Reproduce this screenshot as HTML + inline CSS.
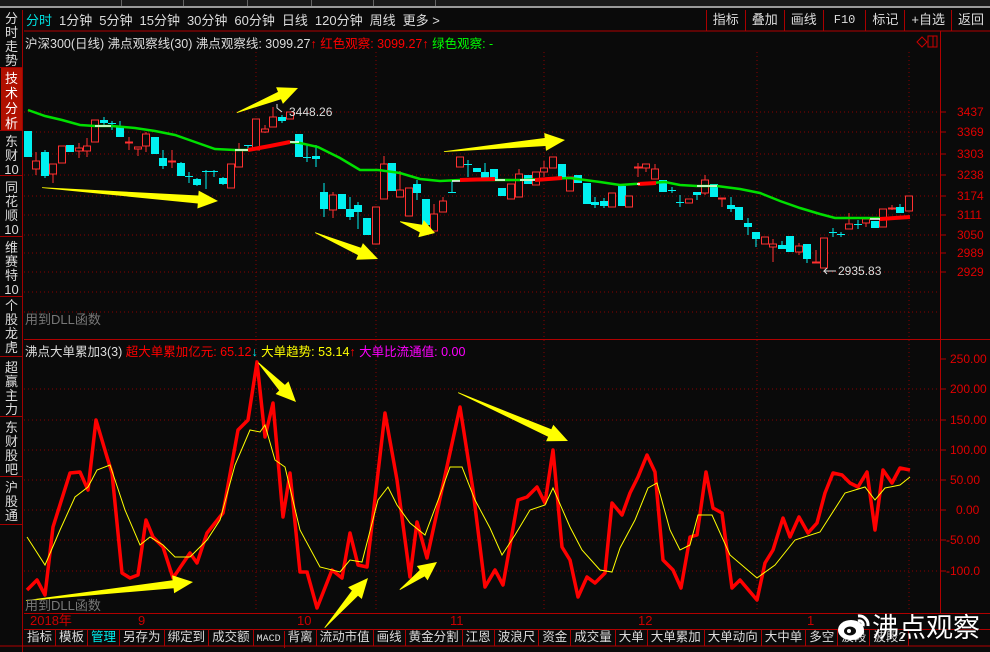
<!DOCTYPE html>
<html><head><meta charset="utf-8">
<style>
*{margin:0;padding:0;box-sizing:border-box}
body{width:990px;height:652px;background:#0a0a0a;overflow:hidden;position:relative;font-family:"Liberation Sans","Noto Sans CJK SC",sans-serif;font-size:12px;color:#ddd}
.abs{position:absolute;white-space:nowrap}
#top{left:0;top:0;width:990px;height:8px;background:#1a1a1a;border-bottom:2px solid #9a9a9a}
#top span{position:absolute;top:0;height:6px;border-right:1px solid #666}
#menu{left:26px;top:10px;font-size:13px;color:#ddd;word-spacing:0}
#menu span{margin-right:7px}
#btns{right:0;top:10px;height:21px;display:flex}
#btns div{border-left:1px solid #a00;padding:0 6px;font-size:13px;line-height:20px;color:#ddd}
.tab{display:inline-block;border-right:1px solid #a00;padding:0 3px;font-size:12.5px;line-height:17px;color:#ddd}
</style></head><body>
<div id="top" class="abs"><span style="left:60px;width:62px"></span><span style="left:122px;width:62px"></span><span style="left:186px;width:62px"></span><span style="left:250px;width:62px"></span><span style="left:312px;width:62px"></span><span style="left:374px;width:62px"></span></div>

<svg class="abs" style="left:0;top:0" width="990" height="652">
<rect x="1" y="68" width="21" height="62" fill="#b01000"/>
<g stroke="#a00000" fill="none"><path d="M22.5 10V652M0 67.5H23M0 130.5H23M0 175.5H23M0 236.5H23M0 296.5H23M0 356.5H23M0 416.5H23M0 476.5H23M0 524.5H23"/></g>
<g stroke="#8a0000" stroke-width="1" stroke-dasharray="1,3" fill="none">
<path d="M24 112H940M24 132H940M24 154H940M24 175H940M24 196H940M24 215H940M24 235H940M24 253H940M24 272H940M24 292H940M24 312H940"/>
<path d="M24 389H940M24 420H940M24 450H940M24 480H940M24 510H940M24 540H940M24 571H940"/>
<path d="M256 52V612M376 52V612M544 52V612M757 52V612M909 52V612"/>
</g>
<g stroke="#b00000" stroke-width="1" fill="none">
<path d="M24 31H990M24 339.5H990M24 613.5H990M24 629.5H990M940.5 31V613"/>
<path d="M0 646H990"/>
</g>
<g stroke="#b00000"><path d="M940 112h6M940 132h6M940 154h6M940 175h6M940 196h6M940 215h6M940 235h6M940 253h6M940 272h6M940 359h6M940 389h6M940 420h6M940 450h6M940 480h6M940 510h6M940 540h6M940 571h6"/></g>
<g fill="#e00000" font-family="Liberation Sans" font-size="12">
<text x="957" y="116">3437</text><text x="957" y="136">3369</text><text x="957" y="158">3303</text><text x="957" y="179">3238</text><text x="957" y="200">3174</text><text x="957" y="219">3111</text><text x="957" y="239">3050</text><text x="957" y="257">2989</text><text x="957" y="276">2929</text>
<text x="950" y="363">250.00</text><text x="950" y="393">200.00</text><text x="950" y="424">150.00</text><text x="950" y="454">100.00</text><text x="950" y="484">50.00</text><text x="956" y="514">0.00</text><text x="946" y="544">-50.00</text><text x="946" y="575">-100.0</text>
</g>
<g font-size="13" fill="#ddd" text-anchor="middle" font-family="Liberation Sans, Noto Sans CJK SC, sans-serif">
<text x="11.5" y="23">分</text><text x="11.5" y="37">时</text><text x="11.5" y="51">走</text><text x="11.5" y="65">势</text>
<text x="11.5" y="83" fill="#fff">技</text><text x="11.5" y="98" fill="#fff">术</text><text x="11.5" y="113" fill="#fff">分</text><text x="11.5" y="128" fill="#fff">析</text>
<text x="11.5" y="146">东</text><text x="11.5" y="160">财</text><text x="11.5" y="174">10</text>
<text x="11.5" y="192">同</text><text x="11.5" y="206">花</text><text x="11.5" y="220">顺</text><text x="11.5" y="234">10</text>
<text x="11.5" y="252">维</text><text x="11.5" y="266">赛</text><text x="11.5" y="280">特</text><text x="11.5" y="294">10</text>
<text x="11.5" y="310">个</text><text x="11.5" y="324">股</text><text x="11.5" y="338">龙</text><text x="11.5" y="352">虎</text>
<text x="11.5" y="372">超</text><text x="11.5" y="386">赢</text><text x="11.5" y="400">主</text><text x="11.5" y="414">力</text>
<text x="11.5" y="432">东</text><text x="11.5" y="446">财</text><text x="11.5" y="460">股</text><text x="11.5" y="474">吧</text>
<text x="11.5" y="492">沪</text><text x="11.5" y="506">股</text><text x="11.5" y="520">通</text>
</g>
<path d="M917 42l5-5 5 5-5 5z" fill="none" stroke="#c00"/><rect x="928" y="36" width="9" height="11" fill="none" stroke="#c00"/><path d="M933 36v11" stroke="#c00"/>
<g id="candles"></g>
<polyline fill="none" stroke="#00e000" stroke-width="2.5" points="28,110 45,116 62,120 80,125 95,126 112,126 135,128 155,131 175,135 195,142 215,149 235,150 248,150 290,142 300,143 318,147 340,158 360,170 378,170 400,173 420,179 440,181 460,180 520,180 570,178 600,182 620,185 665,182 680,185 697,186 717,186 740,189 760,193 780,201 800,208 820,214 835,218 880,218"/>
<g stroke="#ff0000" stroke-width="4" fill="none"><polyline points="248,150 270,146 290,142"/><polyline points="460,180 495,179"/><polyline points="535,180 562,178"/><polyline points="638,184 656,183"/><polyline points="880,219 910,217"/></g>
<g stroke="#fff" stroke-width="1.5"><path d="M95 126h16M235 150h13M290 142h9M452 181h8M495 180h10M520 180h15M640 184h-3M697 186h20M870 219h10"/></g>
<g fill="#ddd" font-size="12"><text x="289" y="116">3448.26</text><text x="838" y="275">2935.83</text></g>
<path d="M282 112l-5-4v-4M836 271h-12l3-3M824 271l3 3" stroke="#ddd" fill="none"/>
<polyline fill="none" stroke="#ff0000" stroke-width="3.5" stroke-linejoin="round" points="27,590 37,580 45,595 53,527 70,473 80,472 88,490 96,420 107,457 112,473 122,573 130,578 138,575 146,520 153,537 163,547 173,578 190,553 197,563 207,533 223,513 238,430 248,420 257,362 265,437 273,403 283,517 290,473 300,572 307,572 317,608 332,570 342,578 350,533 358,565 367,567 385,413 397,480 410,577 417,522 427,558 460,407 473,490 485,587 495,570 503,585 518,500 527,497 537,487 545,503 553,450 562,547 570,560 578,597 587,577 595,583 605,573 612,503 622,515 630,493 638,477 647,455 655,472 663,560 673,570 681,588 690,537 697,535 706,472 713,508 722,513 732,588 740,580 757,600 765,563 773,550 783,518 790,537 799,517 808,533 817,523 825,493 833,473 842,475 850,483 858,487 867,472 875,530 883,470 892,483 900,468 910,470"/>
<polyline fill="none" stroke="#ffff00" stroke-width="1" points="27,537 45,565 60,530 75,497 88,487 97,470 110,465 125,510 140,545 150,537 163,545 175,557 190,557 207,540 220,520 235,465 250,430 260,432 265,425 275,460 285,467 300,530 320,567 340,572 350,560 362,562 378,500 388,487 397,505 410,523 425,535 440,495 450,467 462,467 475,500 490,528 502,555 515,535 530,510 545,505 553,488 570,527 582,550 600,570 612,572 620,548 635,520 648,488 657,483 670,530 680,550 690,545 698,515 712,515 730,555 757,578 775,565 795,540 820,532 845,493 865,487 875,500 885,488 900,485 910,477"/>
<g id="arrows" fill="#ffff00"></g>
<g fill="#cc0000" font-size="13"><text x="30" y="625">2018年</text><text x="138" y="625">9</text><text x="297" y="625">10</text><text x="450" y="625">11</text><text x="638" y="625">12</text><text x="807" y="625">1</text></g>
<g fill="#777" font-size="13"><text x="25" y="324">用到DLL函数</text><text x="25" y="610">用到DLL函数</text></g>
</svg>

<div id="menu" class="abs"><span style="color:#00e0e0">分时</span><span>1分钟</span><span>5分钟</span><span>15分钟</span><span>30分钟</span><span>60分钟</span><span>日线</span><span>120分钟</span><span>周线</span><span>更多 &gt;</span></div>
<div id="btns" class="abs"><div>指标</div><div>叠加</div><div>画线</div><div style="font-family:'Liberation Mono';font-size:12px;padding:0 10px">F10</div><div>标记</div><div>+自选</div><div>返回</div></div>

<div class="abs" style="left:25px;top:33px;font-size:12.5px;color:#ddd">沪深300(日线) 沸点观察线(30) 沸点观察线: 3099.27<span style="color:#f00">↑</span> <span style="color:#f00">红色观察: 3099.27↑</span> <span style="color:#0f0">绿色观察: -</span></div>
<div class="abs" style="left:25px;top:341px;font-size:12.5px;color:#ddd">沸点大单累加3(3) <span style="color:#f00">超大单累加亿元: 65.12</span><span style="color:#0ee">↓</span> <span style="color:#ff0">大单趋势: 53.14</span><span style="color:#f00">↑</span> <span style="color:#f0f">大单比流通值: 0.00</span></div>

<div class="abs" style="left:24px;top:629px;height:17px"><span class="tab">指标</span><span class="tab">模板</span><span class="tab" style="color:#0ee">管理</span><span class="tab">另存为</span><span class="tab">绑定到</span><span class="tab">成交额</span><span class="tab" style="font-size:10px;font-family:'Liberation Mono'">MACD</span><span class="tab">背离</span><span class="tab">流动市值</span><span class="tab">画线</span><span class="tab">黄金分割</span><span class="tab">江恩</span><span class="tab">波浪尺</span><span class="tab">资金</span><span class="tab">成交量</span><span class="tab">大单</span><span class="tab">大单累加</span><span class="tab">大单动向</span><span class="tab">大中单</span><span class="tab">多空</span><span class="tab">波段</span><span class="tab">波段2</span></div>

<div class="abs" style="left:836px;top:606px;font-size:27px;color:#fff;display:flex;align-items:center;text-shadow:0 0 2px #000">
<svg width="36" height="32"><ellipse cx="15" cy="20" rx="13" ry="10" fill="#fff"/><ellipse cx="14" cy="21" rx="6" ry="4.5" fill="#0a0a0a"/><circle cx="13" cy="21" r="2" fill="#fff"/><path d="M22 6a9 9 0 0 1 10 10M22 11a4 4 0 0 1 5 5" stroke="#fff" stroke-width="3" fill="none"/></svg>
<span>沸点观察</span></div>

<script>
var C=[[28,0,131,157,131,157],[36,1,161,169,152,175],[45,0,152,176,150,178],[53,1,164,174,164,183],[62,1,146,163,146,163],[70,0,145,152,145,152],[79,1,148,151,143,158],[87,1,146,151,138,157],[95,1,120,142,120,142],[104,0,120,123,117,125],[112,0,123,124,121,130],[120,0,126,137,121,137],[129,1,142,143,137,150],[138,1,147,149,147,156],[146,1,134,146,132,152],[155,0,137,154,137,154],[163,0,158,166,150,169],[172,1,161,162,150,168],[181,0,163,176,162,176],[189,0,176,177,172,183],[197,0,179,185,178,186],[206,0,171,172,170,189],[214,0,171,172,170,177],[223,0,178,184,177,185],[231,1,164,188,164,188],[239,1,150,167,143,167],[248,0,145,146,145,151],[256,1,119,150,119,150],[265,1,129,132,125,133],[273,1,117,127,107,127],[282,0,117,121,115,123],[290,1,112,119,112,119],[299,0,134,157,134,157],[307,0,157,158,145,162],[316,0,156,159,145,167],[324,0,192,209,183,217],[333,1,195,210,192,218],[342,0,194,209,194,209],[350,0,209,217,197,220],[358,0,205,212,202,229],[367,0,218,235,218,235],[376,1,207,244,207,244],[384,1,164,199,156,199],[392,0,163,191,163,191],[400,1,190,197,171,197],[409,1,188,216,188,216],[417,0,184,193,180,200],[426,0,199,225,199,225],[434,1,214,231,204,231],[443,1,201,212,197,212],[452,0,192,193,181,193],[460,1,157,167,157,167],[468,0,164,165,160,177],[477,0,168,172,168,172],[485,0,172,178,163,180],[494,0,169,181,169,181],[502,0,188,196,188,196],[511,1,184,199,184,199],[519,1,174,197,169,197],[528,0,175,184,175,184],[536,1,172,185,172,185],[544,1,168,172,161,177],[553,1,157,168,157,168],[562,0,164,179,164,179],[570,1,177,191,177,191],[578,0,175,183,175,183],[587,0,183,204,183,204],[595,0,202,205,197,208],[604,0,201,206,198,208],[612,1,193,207,193,207],[622,0,186,206,186,206],[629,1,196,207,196,207],[638,1,167,168,163,177],[646,1,164,168,164,172],[655,1,169,179,164,179],[663,0,180,192,180,192],[672,0,190,191,187,193],[680,0,202,203,195,207],[689,1,199,203,199,203],[697,0,192,195,192,200],[705,1,180,193,175,195],[714,0,184,197,184,197],[722,1,198,199,198,207],[731,0,205,209,197,212],[739,0,207,220,207,220],[748,0,223,227,218,235],[756,0,232,239,232,247],[765,1,237,244,237,244],[773,1,244,247,239,262],[782,0,245,249,241,249],[790,0,236,252,236,252],[799,1,246,252,243,255],[807,0,244,259,244,263],[816,1,262,263,250,263],[824,1,238,268,238,268],[833,0,232,233,228,237],[841,0,234,235,232,237],[849,1,224,229,213,229],[858,0,224,225,220,229],[866,1,219,223,217,227],[875,0,221,228,221,228],[883,1,209,227,209,227],[892,1,208,209,205,210],[900,0,207,213,204,213],[909,1,196,211,196,211]];
var s='';C.forEach(function(c){var x=c[0],col=c[1]?'#ff3030':'#00f0f0';
s+='<line x1="'+x+'" x2="'+x+'" y1="'+c[4]+'" y2="'+c[5]+'" stroke="'+col+'"/>';
var h=Math.max(1,c[3]-c[2]);
if(c[1])s+='<rect x="'+(x-3.5)+'" y="'+c[2]+'" width="7" height="'+h+'" fill="#0a0a0a" stroke="'+col+'"/>';
else s+='<rect x="'+(x-4)+'" y="'+c[2]+'" width="8" height="'+h+'" fill="'+col+'"/>';});
document.getElementById('candles').innerHTML=s;
var A=[[42,188,218,201],[237,113,298,88],[315,233,378,259],[400,222,435,233],[444,152,565,140],[26,601,193,582],[258,363,296,402],[458,393,568,441],[325,628,368,578],[400,590,437,562]];
var t='';A.forEach(function(a){var dx=a[2]-a[0],dy=a[3]-a[1],L=Math.sqrt(dx*dx+dy*dy),ux=dx/L,uy=dy/L,nx=-uy,ny=ux,hl=Math.min(20,L*.4),bx=a[2]-ux*hl,by=a[3]-uy*hl;
function p(x,y){return x.toFixed(1)+','+y.toFixed(1)+' ';}
t+='<polygon points="'+p(a[0],a[1])+p(bx+nx*4,by+ny*4)+p(bx+nx*9,by+ny*9)+p(a[2],a[3])+p(bx-nx*9,by-ny*9)+p(bx-nx*4,by-ny*4)+p(a[0]-nx*.8,a[1]-ny*.8)+'"/>';});
document.getElementById('arrows').innerHTML=t;
</script>
</body></html>
